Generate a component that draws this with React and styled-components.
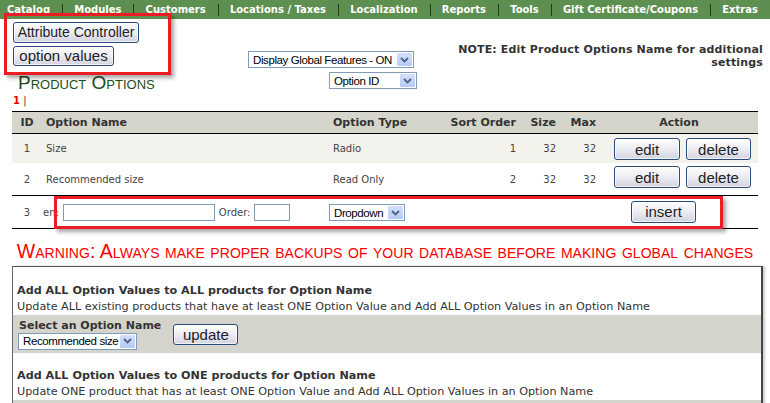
import React from 'react'
import styled, { createGlobalStyle } from 'styled-components'

const GlobalStyle = createGlobalStyle`
  html, body {
    margin: 0;
    padding: 0;
    background: #fff;
  }
  body {
    font-family: "DejaVu Sans", Verdana, sans-serif;
    color: #333;
  }
`

const navItems = [
  'Catalog',
  'Modules',
  'Customers',
  'Locations / Taxes',
  'Localization',
  'Reports',
  'Tools',
  'Gift Certificate/Coupons',
  'Extras',
]

const options = [
  { id: 1, name: 'Size', type: 'Radio', sort: 1, size: 32, max: 32 },
  { id: 2, name: 'Recommended size', type: 'Read Only', sort: 2, size: 32, max: 32 },
]

function Chevron() {
  return (
    <svg width="9" height="6" viewBox="0 0 9 6">
      <path d="M1 1 L4.5 4.5 L8 1" stroke="#4d6185" strokeWidth="1.8" fill="none" />
    </svg>
  )
}

function Select({ width, label }) {
  return (
    <SelectBox width={width}>
      <SelectText>{label}</SelectText>
      <SelectArrow>
        <Chevron />
      </SelectArrow>
    </SelectBox>
  )
}

export default function App() {
  return (
    <Page>
      <GlobalStyle />
      <NavBar>
        {navItems.map((item, i) => (
          <React.Fragment key={item}>
            {i > 0 && <NavSep />}
            <NavLink first={i === 0}>{item}</NavLink>
          </React.Fragment>
        ))}
      </NavBar>

      <Header>
        <LeftCol>
          <Button width={126} size={14}>Attribute Controller</Button>
          <Button width={101} size={15}>option values</Button>
          <Title>Product Options</Title>
        </LeftCol>
        <MidCol>
          <Select width={166} label="Display Global Features - ON" />
          <SelectRow>
            <Select width={88} label="Option ID" />
          </SelectRow>
        </MidCol>
        <NoteCol>
          NOTE: Edit Product Options Name for additional
          <br />
          settings
        </NoteCol>
      </Header>

      <Pager>
        <b>1</b> |
      </Pager>

      <Table>
        <HeadRow>
          <Cell align="center">ID</Cell>
          <Cell>Option Name</Cell>
          <Cell>Option Type</Cell>
          <Cell align="right">Sort Order</Cell>
          <Cell align="right">Size</Cell>
          <Cell align="right">Max</Cell>
          <Cell align="center">Action</Cell>
        </HeadRow>
        {options.map((o, i) => (
          <BodyRow key={o.id} shaded={i === 0} height={i === 0 ? 29 : 32}>
            <Cell align="center">{o.id}</Cell>
            <Cell>{o.name}</Cell>
            <Cell>{o.type}</Cell>
            <Cell align="right">{o.sort}</Cell>
            <Cell align="right">{o.size}</Cell>
            <Cell align="right">{o.max}</Cell>
            <ActionCell top={i === 0 ? 4 : 3}>
              <Button width={66} size={15} height={22}>edit</Button>
              <Button width={65} size={15} height={22}>delete</Button>
            </ActionCell>
          </BodyRow>
        ))}
        <InsertRow>
          <Cell align="center">3</Cell>
          <FieldCell>
            en:
            <TextInput width={152} />
            Order:
            <TextInput width={36} />
          </FieldCell>
          <TypeCell>
            <Select width={76} label="Dropdown" />
          </TypeCell>
          <InsertCell>
            <Button width={65} size={15} height={22}>insert</Button>
          </InsertCell>
        </InsertRow>
      </Table>

      <Warning>Warning: Always make proper backups of your database before making global changes</Warning>

      <GlobalBox>
        <BoxTitle>Add ALL Option Values to ALL products for Option Name</BoxTitle>
        <BoxText>Update ALL existing products that have at least ONE Option Value and Add ALL Option Values in an Option Name</BoxText>
        <Band>
          <BandField>
            <BandLabel>Select an Option Name</BandLabel>
            <Select width={119} label="Recommended size" />
          </BandField>
          <Button width={65} size={15} height={21}>update</Button>
        </Band>
        <BoxTitle spaced>Add ALL Option Values to ONE products for Option Name</BoxTitle>
        <BoxText>Update ONE product that has at least ONE Option Value and Add ALL Option Values in an Option Name</BoxText>
        <Band />
      </GlobalBox>

      <Annotation left={4} top={13} width={167} height={62} />
      <Annotation left={54} top={196} width={669} height={33} />
    </Page>
  )
}

const Page = styled.div`
  position: relative;
  width: 770px;
  height: 403px;
  overflow: hidden;
`

const NavBar = styled.div`
  height: 19px;
  background: #5d8f50;
  display: flex;
  align-items: center;
  padding-left: 7px;
  white-space: nowrap;
`

const NavLink = styled.span`
  color: #fff;
  font-weight: bold;
  font-size: 10px;
  padding: 0 12px 0 ${p => (p.first ? 0 : 12)}px;
`

const NavSep = styled.span`
  width: 1px;
  height: 12px;
  background: #1f3b19;
`

const Header = styled.div`
  display: flex;
  height: 74px;
`

const LeftCol = styled.div`
  width: 235px;
  padding: 3px 0 0 13px;
  display: flex;
  flex-direction: column;
  align-items: flex-start;
  gap: 3px;
`

const MidCol = styled.div`
  width: 180px;
  padding-top: 32px;
`

const SelectRow = styled.div`
  margin: 4px 0 0 81px;
`

const NoteCol = styled.div`
  flex: 1;
  text-align: right;
  padding: 24px 7px 0 0;
  font-size: 11px;
  letter-spacing: 0.15px;
  line-height: 13px;
  font-weight: bold;
  color: #333;
`

const Button = styled.button`
  box-sizing: border-box;
  width: ${p => p.width}px;
  height: ${p => p.height || 21}px;
  padding: 0;
  border: 1px solid #2a4a7a;
  border-radius: 3px;
  background: linear-gradient(#fefefe, #ececf3 50%, #d3d3df);
  box-shadow: inset 0 0 0 1px rgba(255, 255, 255, 0.7);
  font-family: "Liberation Sans", Arial, sans-serif;
  font-size: ${p => p.size}px;
  line-height: 1;
  color: #222;
`

const Title = styled.h1`
  margin: 4px 0 0 5px;
  font-family: "Liberation Sans", Arial, sans-serif;
  font-variant: small-caps;
  font-weight: normal;
  font-size: 19px;
  line-height: 20px;
  color: #1d4f1a;
`

const SelectBox = styled.div`
  box-sizing: border-box;
  width: ${p => p.width}px;
  height: 17px;
  border: 1px solid #7f9db9;
  background: #fff;
  display: flex;
  align-items: center;
  padding: 1px;
`

const SelectText = styled.span`
  flex: 1;
  padding-left: 3px;
  font-family: "Liberation Sans", Arial, sans-serif;
  font-size: 11.5px;
  letter-spacing: -0.4px;
  color: #000;
  white-space: nowrap;
  overflow: hidden;
`

const SelectArrow = styled.span`
  flex: none;
  width: 15px;
  height: 13px;
  background: linear-gradient(#d4e0fb, #b7cbf5);
  border-radius: 1px;
  display: flex;
  align-items: center;
  justify-content: center;
`

const Pager = styled.div`
  height: 18px;
  padding-left: 13px;
  font-size: 10px;
  line-height: 16px;
  color: #333;
  b {
    color: #e00;
  }
`

const Table = styled.div`
  margin: 0 12px;
  width: 746px;
  font-size: 10px;
  color: #333;
`

const columns = '30px 287px 111px 80px 40px 40px 158px'

const HeadRow = styled.div`
  display: grid;
  grid-template-columns: ${columns};
  height: 21px;
  align-items: center;
  background: #d6d5cc;
  border-top: 1px solid #000;
  border-bottom: 1px solid #000;
  font-weight: bold;
  font-size: 11px;
`

const BodyRow = styled.div`
  display: grid;
  grid-template-columns: ${columns};
  height: ${p => p.height}px;
  align-items: center;
  background: ${p => (p.shaded ? '#f3f2ec' : '#fff')};
  color: #444;
`

const Cell = styled.div`
  text-align: ${p => p.align || 'left'};
  padding: ${p => (p.align === 'right' ? '0 4px 0 0' : p.align === 'center' ? '0' : '0 0 0 4px')};
`

const ActionCell = styled.div`
  align-self: start;
  padding: ${p => p.top}px 0 0 14px;
  display: flex;
  gap: 6px;
`

const InsertRow = styled.div`
  display: grid;
  grid-template-columns: 30px 287px 271px 158px;
  height: 32px;
  align-items: center;
  border-top: 1px solid #000;
  border-bottom: 1px solid #000;
  color: #444;
`

const FieldCell = styled.div`
  display: flex;
  align-items: center;
  gap: 4px;
  padding-left: 1px;
`

const TextInput = styled.input`
  box-sizing: border-box;
  width: ${p => p.width}px;
  height: 17px;
  border: 1px solid #7f9db9;
  margin: 0;
`

const TypeCell = styled.div`
  padding-top: 1px;
`

const InsertCell = styled.div`
  padding: 0 0 1px 31px;
`

const Warning = styled.div`
  height: 37px;
  line-height: 44px;
  text-align: center;
  font-family: "Liberation Sans", Arial, sans-serif;
  font-variant: small-caps;
  font-size: 19.5px;
  letter-spacing: 0.05px;
  color: #f00;
  white-space: nowrap;
`

const GlobalBox = styled.div`
  margin-left: 12px;
  width: 748px;
  border-top: 1px solid #555;
  border-left: 1px solid #666;
  border-right: 2px solid #444;
  box-shadow: 2px 0 2px rgba(0, 0, 0, 0.2);
  padding-top: 15px;
  height: 200px;
  font-size: 11.2px;
`

const BoxTitle = styled.div`
  font-weight: bold;
  line-height: 17px;
  padding-left: 4px;
  margin-top: ${p => (p.spaced ? 14 : 0)}px;
`

const BoxText = styled.div`
  line-height: 16px;
  padding-left: 4px;
`

const Band = styled.div`
  background: #d5d4cc;
  height: 38px;
  display: flex;
  align-items: center;
  gap: 12px;
  padding-left: 5px;
`

const BandField = styled.div`
  display: flex;
  flex-direction: column;
  gap: 1px;
`

const BandLabel = styled.div`
  font-weight: bold;
  font-size: 11px;
  padding-left: 1px;
`

const Annotation = styled.div`
  position: absolute;
  left: ${p => p.left}px;
  top: ${p => p.top}px;
  width: ${p => p.width}px;
  height: ${p => p.height}px;
  box-sizing: border-box;
  border: 3px solid #ec1c24;
  box-shadow: 3px 3px 4px rgba(0, 0, 0, 0.35);
  pointer-events: none;
`
